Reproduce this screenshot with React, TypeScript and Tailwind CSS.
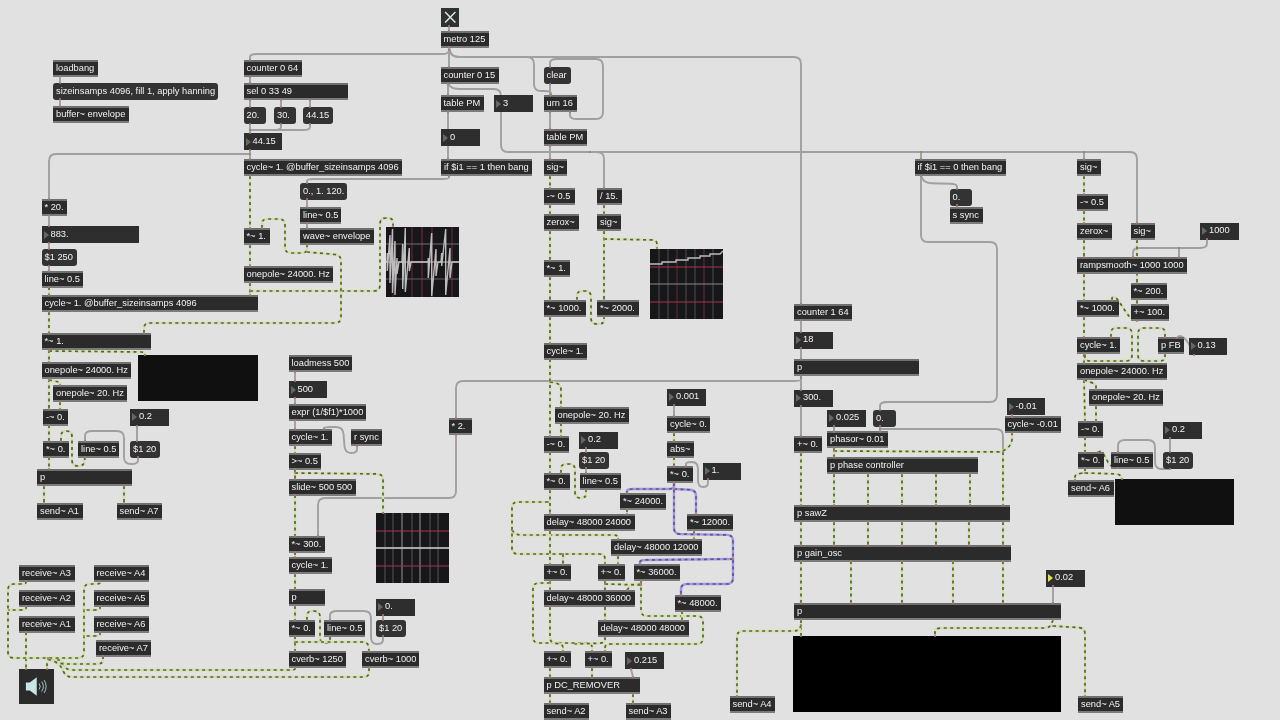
import type { ReactNode } from "react"

type Pt = number[]

// rounded polyline, corners eased like max's patch cords
function cord(pts: Pt[], r = 5) {
  let d = `M${pts[0][0]} ${pts[0][1]}`
  for (let i = 1; i < pts.length; i++) {
    const [x, y] = pts[i]
    if (i === pts.length - 1) {
      d += ` L${x} ${y}`
      break
    }
    const [px, py] = pts[i - 1]
    const [nx, ny] = pts[i + 1]
    const a = Math.hypot(x - px, y - py) || 1
    const b = Math.hypot(nx - x, ny - y) || 1
    const ra = Math.min(r, a / 2)
    const rb = Math.min(r, b / 2)
    d += ` L${x - ((x - px) / a) * ra} ${y - ((y - py) / a) * ra}`
    d += ` Q${x} ${y} ${x + ((nx - x) / b) * rb} ${y + ((ny - y) / b) * rb}`
  }
  return d
}

const GRAY: Pt[][] = [
  [[60, 76], [60, 83]],
  [[60, 99], [60, 106]],
  [[449, 26], [449, 31]],
  [[449, 47], [449, 67]],
  [[449, 47], [449, 54], [250, 54], [250, 60]],
  [[449, 47], [452, 57], [801, 57], [801, 304]],
  [[449, 50], [453, 57], [534, 57], [534, 91], [551, 91], [551, 95]],
  [[570, 112], [570, 119], [603, 119], [603, 59], [550, 59], [550, 67]],
  [[550, 84], [550, 95]],
  [[250, 77], [250, 83]],
  [[250, 100], [250, 107]],
  [[281, 100], [281, 107]],
  [[310, 100], [310, 107]],
  [[250, 124], [250, 133]],
  [[281, 124], [281, 130], [250, 130]],
  [[310, 124], [310, 130], [250, 130]],
  [[250, 150], [250, 159]],
  [[250, 154], [49, 154], [49, 199]],
  [[49, 215], [49, 226]],
  [[49, 243], [49, 249]],
  [[49, 266], [49, 271]],
  [[448, 84], [448, 95]],
  [[448, 112], [448, 159]],
  [[449, 176], [449, 179], [307, 179], [307, 183]],
  [[307, 199], [307, 207]],
  [[307, 223], [307, 228]],
  [[448, 84], [453, 89], [501, 89], [501, 152], [1137, 152], [1137, 223]],
  [[550, 112], [550, 129]],
  [[550, 146], [550, 159]],
  [[590, 152], [604, 152], [604, 188]],
  [[921, 152], [921, 159]],
  [[1084, 152], [1084, 159]],
  [[921, 176], [921, 242], [997, 242], [997, 402], [880, 402], [880, 410]],
  [[921, 176], [925, 183], [957, 184], [957, 189]],
  [[957, 205], [957, 207]],
  [[880, 426], [880, 432]],
  [[880, 429], [1003, 429], [1003, 505]],
  [[801, 320], [801, 332]],
  [[801, 348], [801, 359]],
  [[801, 376], [801, 390]],
  [[801, 406], [801, 436]],
  [[801, 378], [801, 381], [456, 381], [456, 418]],
  [[456, 435], [456, 498], [318, 498], [318, 536]],
  [[834, 426], [834, 432]],
  [[1012, 415], [1012, 417]],
  [[674, 405], [674, 416]],
  [[586, 448], [586, 452]],
  [[586, 468], [586, 473]],
  [[708, 479], [708, 487], [698, 487], [698, 462], [686, 462], [686, 466]],
  [[137, 426], [137, 441]],
  [[85, 441], [85, 431], [124, 431], [124, 464], [138, 464], [138, 457]],
  [[330, 620], [330, 611], [371, 611], [371, 644], [383, 644], [383, 636]],
  [[383, 615], [383, 620]],
  [[295, 372], [295, 381]],
  [[295, 398], [295, 404]],
  [[295, 420], [295, 429]],
  [[357, 446], [357, 453], [345, 453], [343, 427], [324, 427], [324, 429]],
  [[1207, 239], [1207, 248], [1133, 248], [1133, 257]],
  [[1179, 248], [1179, 257]],
  [[1194, 355], [1187, 340], [1180, 335], [1177, 338]],
  [[1170, 438], [1170, 452]],
  [[1118, 452], [1118, 440], [1155, 440], [1155, 469], [1170, 469]],
  [[1053, 586], [1053, 603]],
  [[631, 669], [633, 677]],
]

const SIGNAL: Pt[][] = [
  [[250, 176], [250, 228]],
  [[250, 245], [250, 266]],
  [[250, 283], [250, 295]],
  [[250, 291], [380, 291], [380, 218], [393, 218], [393, 226]],
  [[262, 228], [262, 219], [285, 219], [285, 253], [307, 253], [307, 245]],
  [[307, 252], [341, 255], [341, 323], [144, 323], [144, 333]],
  [[49, 287], [49, 295]],
  [[49, 312], [49, 333]],
  [[49, 350], [49, 362]],
  [[49, 351], [145, 352], [145, 355]],
  [[49, 379], [49, 409]],
  [[49, 380], [60, 382], [60, 385]],
  [[60, 402], [60, 409]],
  [[49, 425], [49, 441]],
  [[61, 441], [61, 431], [72, 431], [72, 466], [84, 466], [85, 457]],
  [[49, 457], [49, 469]],
  [[44, 486], [44, 503]],
  [[124, 486], [124, 503]],
  [[295, 446], [295, 453]],
  [[295, 469], [295, 479]],
  [[295, 473], [383, 474], [383, 513]],
  [[295, 495], [295, 536]],
  [[295, 552], [295, 557]],
  [[295, 574], [295, 589]],
  [[295, 606], [295, 620]],
  [[295, 636], [295, 651]],
  [[307, 620], [307, 611], [320, 611], [320, 643], [330, 643], [330, 636]],
  [[295, 642], [368, 642], [369, 651]],
  [[295, 668], [295, 670], [66, 670], [62, 660], [48, 658]],
  [[369, 668], [369, 677], [66, 677], [60, 664], [48, 659]],
  [[26, 632], [26, 669]],
  [[26, 581], [26, 584], [8, 584], [8, 658], [84, 658], [84, 584], [100, 584], [100, 581]],
  [[26, 606], [26, 610], [9, 610]],
  [[100, 606], [100, 610], [84, 610]],
  [[100, 632], [100, 636], [84, 636]],
  [[103, 656], [103, 664], [60, 664], [47, 658], [47, 669]],
  [[550, 176], [550, 188]],
  [[550, 205], [550, 214]],
  [[550, 231], [550, 260]],
  [[550, 277], [550, 300]],
  [[550, 317], [550, 343]],
  [[550, 359], [550, 436]],
  [[550, 382], [561, 384], [561, 407]],
  [[561, 423], [561, 436]],
  [[550, 452], [550, 473]],
  [[550, 490], [550, 514]],
  [[604, 205], [604, 214]],
  [[604, 231], [604, 300]],
  [[604, 239], [657, 240], [657, 248]],
  [[577, 300], [577, 291], [591, 291], [591, 324], [604, 324], [604, 317]],
  [[561, 473], [561, 464], [575, 464], [575, 498], [586, 498], [586, 490]],
  [[548, 502], [512, 502], [512, 554], [605, 554], [605, 564]],
  [[512, 530], [516, 535], [618, 535], [618, 539]],
  [[550, 531], [550, 564]],
  [[563, 554], [563, 564]],
  [[618, 556], [618, 564]],
  [[627, 509], [627, 514]],
  [[550, 581], [550, 590]],
  [[605, 581], [605, 620]],
  [[550, 583], [533, 583], [533, 643], [592, 643], [592, 651]],
  [[550, 607], [550, 643], [563, 644], [563, 651]],
  [[605, 637], [605, 643], [575, 644]],
  [[641, 581], [641, 616], [703, 616], [703, 644], [605, 644], [605, 651]],
  [[627, 590], [632, 584], [641, 584]],
  [[605, 584], [641, 585]],
  [[682, 611], [682, 620]],
  [[694, 531], [694, 539]],
  [[550, 668], [550, 677]],
  [[592, 668], [592, 677]],
  [[550, 694], [550, 703]],
  [[633, 694], [633, 703]],
  [[674, 433], [674, 441]],
  [[674, 457], [674, 466]],
  [[834, 448], [834, 457]],
  [[834, 451], [1003, 452], [1012, 444], [1012, 433]],
  [[801, 453], [801, 505]],
  [[1003, 452], [1003, 505]],
  [[834, 474], [834, 505]],
  [[868, 474], [868, 505]],
  [[902, 474], [902, 505]],
  [[936, 474], [936, 505]],
  [[970, 474], [970, 505]],
  [[801, 522], [801, 545]],
  [[834, 522], [834, 545]],
  [[868, 522], [868, 545]],
  [[902, 522], [902, 545]],
  [[936, 522], [936, 545]],
  [[969, 522], [969, 545]],
  [[1003, 522], [1003, 545]],
  [[801, 561], [801, 603]],
  [[851, 561], [851, 603]],
  [[902, 561], [902, 603]],
  [[953, 561], [953, 603]],
  [[1003, 561], [1003, 603]],
  [[801, 620], [801, 636]],
  [[801, 625], [799, 631], [737, 631], [737, 696]],
  [[1053, 620], [1050, 628], [935, 628], [935, 636]],
  [[1053, 626], [1085, 628], [1085, 696]],
  [[1084, 176], [1084, 194]],
  [[1084, 211], [1084, 223]],
  [[1084, 240], [1084, 257]],
  [[1084, 274], [1084, 300]],
  [[1084, 317], [1084, 337]],
  [[1084, 354], [1084, 363]],
  [[1084, 380], [1085, 421]],
  [[1084, 380], [1096, 384], [1096, 389]],
  [[1096, 406], [1096, 421]],
  [[1085, 437], [1085, 452]],
  [[1085, 468], [1085, 473], [1075, 474], [1075, 480]],
  [[1085, 473], [1120, 474], [1122, 479]],
  [[1098, 452], [1102, 451], [1110, 466], [1118, 468]],
  [[1137, 240], [1137, 283]],
  [[1137, 300], [1137, 304]],
  [[1112, 300], [1112, 297], [1116, 297], [1130, 318], [1137, 321]],
  [[1111, 337], [1111, 328], [1132, 328], [1132, 361], [1085, 361], [1085, 354]],
  [[1165, 337], [1165, 328], [1138, 328], [1138, 361], [1165, 361], [1165, 354]],
]

const PURPLE: Pt[][] = [
  [[674, 483], [674, 489], [627, 489], [627, 493]],
  [[674, 489], [696, 490], [696, 514]],
  [[674, 483], [674, 534], [733, 535], [733, 584], [681, 584], [681, 595]],
  [[733, 559], [640, 560], [640, 564]],
]

// small tan marks where a cord meets a box
const ends = [...GRAY, ...SIGNAL, ...PURPLE].flatMap((p) => [p[0], p[p.length - 1]])

function Obj({ c, children }: { c: string; children?: ReactNode }) {
  return (
    <div className={"absolute h-[17px] border-y-2 border-t-[#6f6f6f] border-b-[#7b7b7b] bg-[#2b2b2b] pl-[3px] text-[9.3px] leading-[13px] whitespace-nowrap text-[#f2f2f2] " + c}>
      {children}
    </div>
  )
}

function Msg({ c, children }: { c: string; children?: ReactNode }) {
  return (
    <div className={"absolute h-[17px] rounded-[3px] bg-[#333333] pl-[3px] text-[9.3px] leading-[17px] whitespace-nowrap text-[#f2f2f2] " + c}>
      {children}
    </div>
  )
}

function Num({ c, hot, children }: { c: string; hot?: boolean; children?: ReactNode }) {
  return (
    <div className={"absolute flex h-[17px] w-[38.5px] items-center gap-[2px] bg-[#2e2e2e] pl-[2px] text-[9.3px] whitespace-nowrap text-[#f2f2f2] " + c}>
      <span className={hot ? "h-0 w-0 border-y-[4px] border-l-[5px] border-y-transparent border-l-[#dfe445]" : "h-0 w-0 border-y-[4px] border-l-[5px] border-y-transparent border-l-[#666666]"} />
      {children}
    </div>
  )
}

function Scope({ c, h, v, wave }: { c: string; h: [number, string][]; v: [number, string][]; wave: string }) {
  return (
    <div className={"absolute h-[70px] w-[73px] bg-[#17171a] " + c}>
      <svg viewBox="0 0 73 70" className="h-full w-full">
        {v.map(([x, col]) => (
          <line key={x} x1={x} x2={x} y1={0} y2={70} stroke={col} strokeWidth={0.9} />
        ))}
        {h.map(([y, col]) => (
          <line key={y} x1={0} x2={73} y1={y} y2={y} stroke={col} strokeWidth={1} />
        ))}
        <path d={wave} fill="none" stroke="#bdbdbd" strokeWidth={1.4} />
      </svg>
    </div>
  )
}

export default function App() {
  return (
    <div className="h-[720px] w-[1280px] overflow-hidden bg-[#e1e1e1]">
      <div className="relative h-[720px] w-[1280px] bg-[#e1e1e1] font-['Liberation_Sans',Arial,sans-serif] blur-[0.4px]">
        {/* patch cords under the boxes */}
        <svg className="absolute inset-0 h-[720px] w-[1280px]" viewBox="0 0 1280 720" fill="none">
          {GRAY.map((p, i) => (
            <path key={i} d={cord(p, 7)} stroke="#a0a0a0" strokeWidth={1.9} />
          ))}
          {SIGNAL.map((p, i) => (
            <g key={i}>
              <path d={cord(p, 6)} stroke="#d2e2a6" strokeWidth={2.4} />
              <path d={cord(p, 6)} stroke="#566040" strokeWidth={1.7} strokeDasharray="3 3.5" />
            </g>
          ))}
          {PURPLE.map((p, i) => (
            <g key={i}>
              <path d={cord(p, 6)} stroke="#a496de" strokeWidth={2.4} />
              <path d={cord(p, 6)} stroke="#5f5590" strokeWidth={1.7} strokeDasharray="3 3.5" />
            </g>
          ))}
        </svg>

        {/* top left */}
        <Obj c="left-[53px] top-[59.5px] w-[45px]">loadbang</Obj>
        <Msg c="left-[53px] top-[82.5px] w-[165px]">sizeinsamps 4096, fill 1, apply hanning</Msg>
        <Obj c="left-[53px] top-[105.5px] w-[76px]">buffer~ envelope</Obj>
        <Obj c="left-[243.5px] top-[60px] w-[58px]">counter 0 64</Obj>
        <Obj c="left-[243.5px] top-[83px] w-[104px]">sel 0 33 49</Obj>
        <Msg c="left-[243.5px] top-[106.5px] w-[22px]">20.</Msg>
        <Msg c="left-[274px] top-[106.5px] w-[22px]">30.</Msg>
        <Msg c="left-[303px] top-[106.5px] w-[30px]">44.15</Msg>
        <Num c="left-[243.5px] top-[133px]">44.15</Num>
        <Obj c="left-[243.5px] top-[159px] w-[158px]">cycle~ 1. @buffer_sizeinsamps 4096</Obj>
        <Msg c="left-[300px] top-[182.5px] w-[47px]">0., 1. 120.</Msg>
        <Obj c="left-[300px] top-[206.5px] w-[41px]">line~ 0.5</Obj>
        <Obj c="left-[300px] top-[228px] w-[74px]">wave~ envelope</Obj>
        <Obj c="left-[243.5px] top-[228px] w-[26px]">*~ 1.</Obj>
        <Obj c="left-[243.5px] top-[266px] w-[89px]">onepole~ 24000. Hz</Obj>

        {/* left column */}
        <Obj c="left-[41.5px] top-[198.5px] w-[25.5px]">* 20.</Obj>
        <Num c="left-[41.5px] top-[226px] w-[97px]">883.</Num>
        <Msg c="left-[41.5px] top-[249px] w-[35px]">$1 250</Msg>
        <Obj c="left-[41.5px] top-[270.5px] w-[41.5px]">line~ 0.5</Obj>
        <Obj c="left-[41.5px] top-[295px] w-[216px]">cycle~ 1. @buffer_sizeinsamps 4096</Obj>
        <Obj c="left-[41.5px] top-[333px] w-[109.5px]">*~ 1.</Obj>
        <Obj c="left-[41.5px] top-[362px] w-[89px]">onepole~ 24000. Hz</Obj>
        <Obj c="left-[53px] top-[385px] w-[74px]">onepole~ 20. Hz</Obj>
        <div className="absolute left-[138px] top-[355px] h-[46px] w-[119.5px] bg-[#101010]" />
        <Obj c="left-[43px] top-[408.5px] w-[25px]">-~ 0.</Obj>
        <Num c="left-[130px] top-[408.5px]">0.2</Num>
        <Obj c="left-[43px] top-[440.5px] w-[25.5px]">*~ 0.</Obj>
        <Obj c="left-[78px] top-[440.5px] w-[41px]">line~ 0.5</Obj>
        <Msg c="left-[130px] top-[440.5px] w-[29.5px]">$1 20</Msg>
        <Obj c="left-[37px] top-[469px] w-[95px]">p</Obj>
        <Obj c="left-[37px] top-[502.5px] w-[45.5px]">send~ A1</Obj>
        <Obj c="left-[116.5px] top-[502.5px] w-[45.5px]">send~ A7</Obj>

        {/* receives and dac */}
        <Obj c="left-[19px] top-[564.5px] w-[55.5px]">receive~ A3</Obj>
        <Obj c="left-[19px] top-[590px] w-[55.5px]">receive~ A2</Obj>
        <Obj c="left-[19px] top-[615.5px] w-[55.5px]">receive~ A1</Obj>
        <Obj c="left-[93.5px] top-[564.5px] w-[55.5px]">receive~ A4</Obj>
        <Obj c="left-[93.5px] top-[590px] w-[55.5px]">receive~ A5</Obj>
        <Obj c="left-[93.5px] top-[615.5px] w-[55.5px]">receive~ A6</Obj>
        <Obj c="left-[96px] top-[639.5px] w-[55px]">receive~ A7</Obj>
        <div className="absolute left-[19px] top-[668.5px] h-[35px] w-[34.5px] bg-[#2b2b2b]">
          <svg viewBox="0 0 35 35" className="h-full w-full" fill="none">
            <path d="M7 13.5H11L18 8V27L11 21.5H7Z" fill="#c9e6e6" />
            <path d="M20.5 14.5Q22.5 17.5 20.5 20.5M23 12.5Q26.5 17.5 23 22.5M25.5 11Q29.5 17.5 25.5 24" stroke="#a9c6c8" strokeWidth={1} />
          </svg>
        </div>

        {/* second column */}
        <Scope
          c="left-[386px] top-[226.5px]"
          h={[[17, "#7c6a70"], [35, "#e6b9c4"], [52, "#6d5a60"]]}
          v={[[7, "#5c2230"], [26, "#7c2a3c"], [36, "#8f2f44"], [46, "#7c2a3c"], [66, "#7c2a3c"]]}
          wave="M0 35H1L1.3 26V44L4 8V56L6.5 2V66L9 14V68L11 31V47L13 35H16L16.7 17V62L19.3 1V65L23.3 21V44L25 35H42L42.3 31V51L45.7 6V69L50 22V49L52 35H55L55.7 26V39L59.7 2V68L64 21V51L66 35H73"
        />
        <Obj c="left-[288.5px] top-[355px] w-[63.5px]">loadmess 500</Obj>
        <Num c="left-[288.5px] top-[381px]">500</Num>
        <Obj c="left-[288.5px] top-[403.5px] w-[77.5px]">expr (1/$f1)*1000</Obj>
        <Obj c="left-[288.5px] top-[429px] w-[43px]">cycle~ 1.</Obj>
        <Obj c="left-[351px] top-[429px] w-[30.5px]">r sync</Obj>
        <Obj c="left-[288.5px] top-[452.5px] w-[32.5px]">&gt;~ 0.5</Obj>
        <Obj c="left-[288.5px] top-[478.5px] w-[67px]">slide~ 500 500</Obj>
        <Scope
          c="left-[376px] top-[513px]"
          h={[[18, "#b03248"], [35, "#b9b9b9"], [53, "#b03248"]]}
          v={[[9, "#5e5e5e"], [17, "#5e5e5e"], [26, "#a8a8a8"], [36, "#5e5e5e"], [44, "#a8a8a8"], [54, "#5e5e5e"], [62, "#5e5e5e"]]}
          wave="M0 35H73"
        />
        <Obj c="left-[288.5px] top-[535.5px] w-[36px]">*~ 300.</Obj>
        <Obj c="left-[288.5px] top-[557px] w-[43px]">cycle~ 1.</Obj>
        <Obj c="left-[288.5px] top-[589px] w-[36px]">p</Obj>
        <Obj c="left-[288.5px] top-[619.5px] w-[26px]">*~ 0.</Obj>
        <Obj c="left-[324px] top-[619.5px] w-[41px]">line~ 0.5</Obj>
        <Num c="left-[376px] top-[598.5px]">0.</Num>
        <Msg c="left-[376px] top-[619.5px] w-[29.5px]">$1 20</Msg>
        <Obj c="left-[288.5px] top-[651px] w-[57.5px]">cverb~ 1250</Obj>
        <Obj c="left-[362px] top-[651px] w-[57px]">cverb~ 1000</Obj>

        {/* metro */}
        <div className="absolute left-[440.5px] top-[8px] h-[18.5px] w-[18.5px] bg-[#2d3330]">
          <svg viewBox="0 0 18 18" className="h-full w-full" fill="none" stroke="#e8e8e8" strokeWidth={1.4}>
            <path d="M4 4L14 14M14 4L4 14" />
          </svg>
        </div>
        <Obj c="left-[440.5px] top-[30.5px] w-[48.5px]">metro 125</Obj>
        <Obj c="left-[440.5px] top-[67px] w-[58px]">counter 0 15</Obj>
        <Obj c="left-[440.5px] top-[95px] w-[43px]">table PM</Obj>
        <Num c="left-[494px] top-[95px]">3</Num>
        <Num c="left-[441px] top-[129px]">0</Num>
        <Obj c="left-[441px] top-[159px] w-[91px]">if $i1 == 1 then bang</Obj>
        <Msg c="left-[543.5px] top-[67px] w-[27px]">clear</Msg>
        <Obj c="left-[543.5px] top-[95px] w-[33px]">urn 16</Obj>
        <Obj c="left-[543.5px] top-[129px] w-[43px]">table PM</Obj>
        <Obj c="left-[543.5px] top-[159px] w-[23.5px]">sig~</Obj>
        <Obj c="left-[543.5px] top-[188px] w-[31px]">-~ 0.5</Obj>
        <Obj c="left-[597px] top-[188px] w-[25px]">/ 15.</Obj>
        <Obj c="left-[543.5px] top-[214px] w-[35px]">zerox~</Obj>
        <Obj c="left-[597px] top-[214px] w-[24px]">sig~</Obj>
        <Obj c="left-[543.5px] top-[260px] w-[26px]">*~ 1.</Obj>
        <Obj c="left-[543.5px] top-[300px] w-[42px]">*~ 1000.</Obj>
        <Obj c="left-[597px] top-[300px] w-[41.5px]">*~ 2000.</Obj>
        <Scope
          c="left-[649.5px] top-[248.5px]"
          h={[[18, "#b03248"], [35, "#8a8a8a"], [53, "#b03248"]]}
          v={[[9, "#555555"], [18, "#555555"], [27, "#6a3340"], [36, "#555555"], [45, "#555555"], [54, "#6a3340"], [63, "#555555"]]}
          wave="M0 15H12V13H26V11H38V9H50V7H60V5H70L73 2"
        />
        <Obj c="left-[543.5px] top-[342.5px] w-[43px]">cycle~ 1.</Obj>
        <Obj c="left-[448.5px] top-[418px] w-[23.5px]">* 2.</Obj>
        <Obj c="left-[554.5px] top-[406.5px] w-[74px]">onepole~ 20. Hz</Obj>
        <Obj c="left-[543.5px] top-[435.5px] w-[25px]">-~ 0.</Obj>
        <Num c="left-[579px] top-[431.5px]">0.2</Num>
        <Msg c="left-[579px] top-[451.5px] w-[29.5px]">$1 20</Msg>
        <Num c="left-[667px] top-[388.5px]">0.001</Num>
        <Obj c="left-[667px] top-[416px] w-[43px]">cycle~ 0.</Obj>
        <Obj c="left-[667px] top-[440.5px] w-[27px]">abs~</Obj>
        <Obj c="left-[667px] top-[466px] w-[26px]">*~ 0.</Obj>
        <Num c="left-[702.5px] top-[462.5px]">1.</Num>
        <Obj c="left-[543.5px] top-[473px] w-[26px]">*~ 0.</Obj>
        <Obj c="left-[579.5px] top-[473px] w-[41px]">line~ 0.5</Obj>
        <Obj c="left-[620px] top-[492.5px] w-[46px]">*~ 24000.</Obj>
        <Obj c="left-[687px] top-[514px] w-[46px]">*~ 12000.</Obj>
        <Obj c="left-[543.5px] top-[514px] w-[91px]">delay~ 48000 24000</Obj>
        <Obj c="left-[611px] top-[539px] w-[91px]">delay~ 48000 12000</Obj>
        <Obj c="left-[543.5px] top-[564px] w-[27.5px]">+~ 0.</Obj>
        <Obj c="left-[597.5px] top-[564px] w-[27.5px]">+~ 0.</Obj>
        <Obj c="left-[633.5px] top-[564px] w-[46px]">*~ 36000.</Obj>
        <Obj c="left-[543.5px] top-[590px] w-[91px]">delay~ 48000 36000</Obj>
        <Obj c="left-[674.5px] top-[594.5px] w-[46px]">*~ 48000.</Obj>
        <Obj c="left-[597.5px] top-[620px] w-[91px]">delay~ 48000 48000</Obj>
        <Obj c="left-[543.5px] top-[651px] w-[27.5px]">+~ 0.</Obj>
        <Obj c="left-[584.5px] top-[651px] w-[27.5px]">+~ 0.</Obj>
        <Num c="left-[625px] top-[652px]">0.215</Num>
        <Obj c="left-[543.5px] top-[677px] w-[96.5px]">p DC_REMOVER</Obj>
        <Obj c="left-[543.5px] top-[703px] w-[45.5px]">send~ A2</Obj>
        <Obj c="left-[625.5px] top-[703px] w-[45.5px]">send~ A3</Obj>
        <Obj c="left-[729.5px] top-[696px] w-[45px]">send~ A4</Obj>

        {/* oscillator bank */}
        <Obj c="left-[794px] top-[303.5px] w-[58px]">counter 1 64</Obj>
        <Num c="left-[794px] top-[331.5px]">18</Num>
        <Obj c="left-[794px] top-[359px] w-[125px]">p</Obj>
        <Num c="left-[794px] top-[389.5px]">300.</Num>
        <Num c="left-[827px] top-[409.5px]">0.025</Num>
        <Msg c="left-[873px] top-[409.5px] w-[22.5px]">0.</Msg>
        <Obj c="left-[794px] top-[436px] w-[28px]">+~ 0.</Obj>
        <Obj c="left-[827px] top-[431px] w-[60.5px]">phasor~ 0.01</Obj>
        <Obj c="left-[827px] top-[457px] w-[151px]">p phase controller</Obj>
        <Num c="left-[1006.5px] top-[398px]">-0.01</Num>
        <Obj c="left-[1004.5px] top-[416px] w-[56.5px]">cycle~ -0.01</Obj>
        <Obj c="left-[794px] top-[505px] w-[215.5px]">p sawZ</Obj>
        <Obj c="left-[794px] top-[544.5px] w-[216.5px]">p gain_osc</Obj>
        <Num hot c="left-[1046px] top-[569.5px]">0.02</Num>
        <Obj c="left-[794px] top-[603px] w-[266.5px]">p</Obj>
        <div className="absolute left-[793px] top-[636px] h-[76px] w-[267.5px] bg-black" />
        <Obj c="left-[1078px] top-[695.5px] w-[45px]">send~ A5</Obj>

        {/* right column */}
        <Obj c="left-[914.5px] top-[159px] w-[91px]">if $i1 == 0 then bang</Obj>
        <Msg c="left-[949.5px] top-[188.5px] w-[22.5px]">0.</Msg>
        <Obj c="left-[949.5px] top-[206.5px] w-[33px]">s sync</Obj>
        <Obj c="left-[1077px] top-[159px] w-[24px]">sig~</Obj>
        <Obj c="left-[1077px] top-[194px] w-[31px]">-~ 0.5</Obj>
        <Obj c="left-[1077px] top-[222.5px] w-[35px]">zerox~</Obj>
        <Obj c="left-[1130.5px] top-[222.5px] w-[24px]">sig~</Obj>
        <Num c="left-[1200px] top-[222.5px]">1000</Num>
        <Obj c="left-[1077px] top-[257px] w-[110px]">rampsmooth~ 1000 1000</Obj>
        <Obj c="left-[1130.5px] top-[283px] w-[36px]">*~ 200.</Obj>
        <Obj c="left-[1130.5px] top-[304px] w-[38px]">+~ 100.</Obj>
        <Obj c="left-[1077px] top-[300px] w-[41.5px]">*~ 1000.</Obj>
        <Obj c="left-[1077px] top-[337px] w-[43px]">cycle~ 1.</Obj>
        <Obj c="left-[1158px] top-[337px] w-[26px]">p FB</Obj>
        <Num c="left-[1188.5px] top-[337.5px]">0.13</Num>
        <Obj c="left-[1077px] top-[363px] w-[89.5px]">onepole~ 24000. Hz</Obj>
        <Obj c="left-[1089px] top-[389px] w-[73.5px]">onepole~ 20. Hz</Obj>
        <Obj c="left-[1078px] top-[420.5px] w-[25px]">-~ 0.</Obj>
        <Num c="left-[1163px] top-[421.5px]">0.2</Num>
        <Obj c="left-[1078px] top-[451.5px] w-[26px]">*~ 0.</Obj>
        <Obj c="left-[1111px] top-[451.5px] w-[41.5px]">line~ 0.5</Obj>
        <Msg c="left-[1163px] top-[451.5px] w-[29.5px]">$1 20</Msg>
        <Obj c="left-[1068px] top-[479.5px] w-[45.5px]">send~ A6</Obj>
        <div className="absolute left-[1114.5px] top-[479px] h-[46px] w-[119px] bg-[#101010]" />

        {/* cord ends on top of the boxes */}
        <svg className="absolute inset-0 h-[720px] w-[1280px]" viewBox="0 0 1280 720">
          {ends.map(([x, y], i) => (
            <circle key={i} cx={x} cy={y} r={1.1} fill="#a97f6c" />
          ))}
        </svg>
      </div>
    </div>
  )
}
